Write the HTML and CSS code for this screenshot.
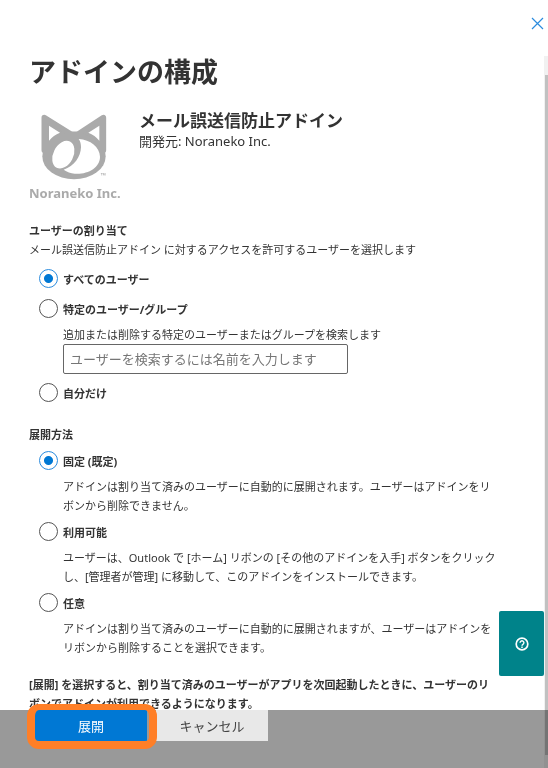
FILE: index.html
```
<!DOCTYPE html>
<html lang="ja">
<head>
    <meta charset="UTF-8">
    <meta name="viewport" content="width=device-width, initial-scale=1.0">
    <title>アドインの構成</title>
    <link rel="stylesheet" href="styles.css">
</head>
<body>
    <header class="topbar">
        <button type="button" class="close" aria-label="閉じる">
            <svg width="13" height="13" viewBox="0 0 13 13"><path d="M1 1l11 11M12 1L1 12" fill="none" stroke="#2b8cde" stroke-width="1.2"/></svg>
        </button>
    </header>

    <main class="content">
        <h1>アドインの構成</h1>

        <div class="app">
            <figure class="logo">
                <svg viewBox="27 15 276 222" aria-hidden="true">
                    <g fill="#aaa" stroke="#aaa" stroke-linejoin="round">
                        <path d="M73 38L150 86Q163 90 177 86L250 38V136H73Z" stroke-width="17"/>
                        <ellipse cx="162" cy="154" rx="95" ry="69" stroke="none"/>
                    </g>
                    <g fill="#fff">
                        <path d="M87 62L120 83Q100 91 87 107Z"/>
                        <path d="M238 62L205 83Q225 91 238 107Z"/>
                        <ellipse cx="130" cy="149" rx="30" ry="44" transform="rotate(27 130 149)"/>
                        <path d="M176 102C211 104 239 126 240 155C240 188 203 209 164 206C152 205 141 201 131 194C163 184 182 155 183 127C183 117 181 109 176 102Z"/>
                    </g>
                    <text x="258" y="218" class="tm">™</text>
                </svg>
                <figcaption>Noraneko Inc.</figcaption>
            </figure>
            <div class="app-info">
                <h2>メール誤送信防止アドイン</h2>
                <p>開発元: Noraneko Inc.</p>
            </div>
        </div>

        <fieldset class="group assign">
            <legend>ユーザーの割り当て</legend>
            <p>メール誤送信防止アドイン に対するアクセスを許可するユーザーを選択します</p>
            <div class="options">
                <div class="option">
                    <input type="radio" name="users" id="users-all" checked>
                    <label for="users-all">すべてのユーザー</label>
                </div>
                <div class="option">
                    <input type="radio" name="users" id="users-some">
                    <label for="users-some">特定のユーザー/グループ</label>
                    <div class="detail">
                        <label for="search" class="hint">追加または削除する特定のユーザーまたはグループを検索します</label>
                        <input type="text" id="search" class="search" placeholder="ユーザーを検索するには名前を入力します">
                    </div>
                </div>
                <div class="option">
                    <input type="radio" name="users" id="users-me">
                    <label for="users-me">自分だけ</label>
                </div>
            </div>
        </fieldset>

        <fieldset class="group method">
            <legend>展開方法</legend>
            <div class="options">
                <div class="option">
                    <input type="radio" name="method" id="method-fixed" checked>
                    <label for="method-fixed">固定 (既定)</label>
                    <p class="detail">アドインは割り当て済みのユーザーに自動的に展開されます。ユーザーはアドインをリボンから削除できません。</p>
                </div>
                <div class="option">
                    <input type="radio" name="method" id="method-available">
                    <label for="method-available">利用可能</label>
                    <p class="detail">ユーザーは、Outlook で [ホーム] リボンの [その他のアドインを入手] ボタンをクリックし、[管理者が管理] に移動して、このアドインをインストールできます。</p>
                </div>
                <div class="option">
                    <input type="radio" name="method" id="method-optional">
                    <label for="method-optional">任意</label>
                    <p class="detail">アドインは割り当て済みのユーザーに自動的に展開されますが、ユーザーはアドインをリボンから削除することを選択できます。</p>
                </div>
            </div>
        </fieldset>

        <p class="note">[展開] を選択すると、割り当て済みのユーザーがアプリを次回起動したときに、ユーザーのリボンでアドインが利用できるようになります。</p>
    </main>

    <footer class="actions">
        <div class="deploy">
            <button type="button" class="btn primary">展開</button>
        </div>
        <button type="button" class="btn">キャンセル</button>
    </footer>

    <div class="scrollbar"><div class="thumb"></div></div>

    <button type="button" class="help" aria-label="ヘルプ">
        <svg width="14" height="14" viewBox="0 0 14 14" fill="none" stroke="#fff">
            <circle cx="7" cy="7" r="5.8" stroke-width="1.7"/>
            <path d="M5.1 5.7a1.9 1.9 0 1 1 2.9 1.6c-.7.5-1 .7-1 1.4" stroke-width="1.4"/>
            <path d="M7 9.5v1.4" stroke-width="1.5"/>
        </svg>
    </button>
</body>
</html>
```
FILE: styles.css
```
* {
    margin: 0;
    padding: 0;
    box-sizing: border-box;
}

body {
    position: relative;
    display: flex;
    flex-direction: column;
    height: 100vh;
    overflow: hidden;
    background: #fff;
    color: #333;
    font-family: "Noto Sans", "Noto Sans CJK JP", sans-serif;
    font-size: 11px;
    line-height: 19px;
}

button, input {
    font-family: inherit;
    font-size: 13px;
    border: 0;
}

button {
    cursor: pointer;
}

.topbar {
    display: flex;
    flex: none;
    justify-content: flex-end;
    align-items: center;
    height: 46px;
    padding-right: 4px;
}

.close {
    display: flex;
    background: none;
}

.content {
    flex: 1;
    min-height: 0;
    overflow: hidden;
    padding: 8px 52px 0 29px;
}

h1 {
    font-size: 27px;
    line-height: 36px;
}

.app {
    display: flex;
    gap: 18px;
    margin-top: 20px;
}

.logo {
    width: 92px;
    height: 92px;
}

.logo svg {
    display: block;
    width: 92px;
    height: 74px;
}

.logo figcaption {
    color: #aaa;
    font-size: 13px;
    font-weight: bold;
    white-space: nowrap;
}

.tm {
    fill: #aaa;
    font-size: 20px;
    text-anchor: end;
}

.app-info h2 {
    font-size: 17px;
    line-height: 22px;
}

.app-info p {
    font-size: 13px;
}

/* ラジオボタンのグループ */
.group {
    min-width: 0;
    border: 0;
}

.assign {
    margin-top: 19px;
}

.method {
    margin-top: 21px;
}

legend {
    display: block;
    font-weight: bold;
}

.options {
    display: flex;
    flex-direction: column;
    gap: 9px;
    padding: 10px 0 0 10px;
}

.method .options {
    gap: 7px;
    padding-top: 7px;
}

.option {
    display: grid;
    grid-template-columns: 19px 1fr;
    column-gap: 5px;
    row-gap: 5px;
    align-items: start;
}

.option > label {
    padding-top: 1px;
    font-weight: bold;
    line-height: 20px;
}

.option input[type="radio"] {
    appearance: none;
    width: 19px;
    height: 19px;
    border: 1px solid #555;
    border-radius: 50%;
}

.option input[type="radio"]:checked {
    border-color: #2b8cde;
    background: radial-gradient(circle, #0078d4 4px, #fff 5px);
}

.detail {
    grid-column: 2;
}

.hint {
    display: block;
}

.search {
    display: block;
    width: 285px;
    max-width: 100%;
    height: 30px;
    padding: 0 6px;
    border: 1px solid #666;
    border-radius: 2px;
}

.search::placeholder {
    color: #767676;
}

.note {
    margin-top: 18px;
    font-weight: bold;
}

.actions {
    display: flex;
    flex: none;
    gap: 9px;
    height: 58px;
    padding-left: 35px;
    background: #999;
}

.btn {
    width: 112px;
    height: 31px;
    background: #e8e8e8;
    color: #444;
    font-size: 13px;
}

.primary {
    background: #0078d4;
    color: #fff;
}

/* 展開ボタンを囲むオレンジの枠 */
.deploy {
    position: relative;
    height: 31px;
}

.deploy::after {
    content: "";
    position: absolute;
    inset: -6px -10px -8px -8px;
    border: 8px solid #ff7f27;
    border-top-width: 6px;
    border-radius: 12px;
    pointer-events: none;
}

.scrollbar {
    position: absolute;
    top: 56px;
    right: 0;
    bottom: 0;
    width: 4px;
    padding: 19px 0 13px 1px;
    background: #f1f1f1;
    mix-blend-mode: multiply;
}

.thumb {
    height: 100%;
    background: #c1c1c1;
}

.help {
    position: absolute;
    right: 4px;
    bottom: 92px;
    display: flex;
    justify-content: center;
    align-items: center;
    width: 45px;
    height: 65px;
    border-radius: 2px;
    background: #00838a;
}
```
